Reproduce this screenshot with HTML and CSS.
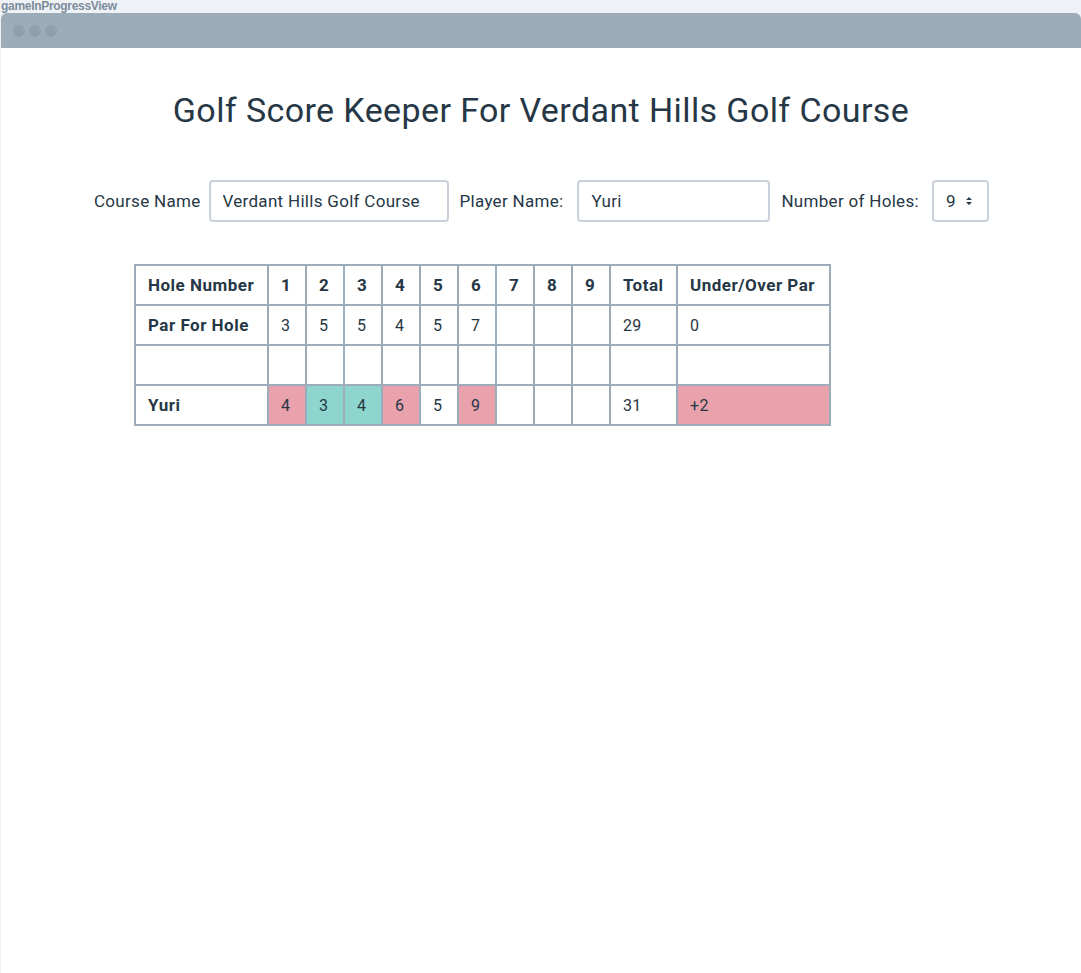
FILE: index.html
```html
<!DOCTYPE html>
<html>
<head>
<meta charset="utf-8">
<link rel="stylesheet" href="styles.css">
</head>
<body>
<div class="view-label">gameInProgressView</div>
<div class="window">
  <div class="titlebar">
    <span class="dot"></span><span class="dot"></span><span class="dot"></span>
  </div>
  <div class="content">
    <h1 class="title">Golf Score Keeper For Verdant Hills Golf Course</h1>
    <div class="form-row">
      <label class="lbl lbl-course">Course Name</label>
      <input class="field field-course" type="text" value="Verdant Hills Golf Course">
      <label class="lbl lbl-player">Player Name:</label>
      <input class="field field-player" type="text" value="Yuri">
      <label class="lbl lbl-holes">Number of Holes:</label>
      <div class="select"><span>9</span>
        <svg class="arrows" width="8" height="10" viewBox="0 0 8 10"><path d="M1 4 L4 1 L7 4 Z M1 6 L4 9 L7 6 Z" fill="#2a3a4a"/></svg>
      </div>
    </div>
    <table class="score">
      <colgroup>
        <col class="w-name">
        <col class="w-hole"><col class="w-hole"><col class="w-hole"><col class="w-hole"><col class="w-hole"><col class="w-hole"><col class="w-hole"><col class="w-hole"><col class="w-hole">
        <col class="w-total">
        <col class="w-par">
      </colgroup>
      <tr class="head">
        <th>Hole Number</th>
        <th>1</th><th>2</th><th>3</th><th>4</th><th>5</th><th>6</th><th>7</th><th>8</th><th>9</th>
        <th>Total</th>
        <th>Under/Over Par</th>
      </tr>
      <tr>
        <th>Par For Hole</th>
        <td>3</td><td>5</td><td>5</td><td>4</td><td>5</td><td>7</td><td></td><td></td><td></td>
        <td>29</td><td>0</td>
      </tr>
      <tr>
        <th></th>
        <td></td><td></td><td></td><td></td><td></td><td></td><td></td><td></td><td></td>
        <td></td><td></td>
      </tr>
      <tr>
        <th>Yuri</th>
        <td class="over">4</td><td class="under">3</td><td class="under">4</td><td class="over">6</td><td>5</td><td class="over">9</td><td></td><td></td><td></td>
        <td>31</td><td class="over">+2</td>
      </tr>
    </table>
  </div>
</div>
</body>
</html>
```

FILE: styles.css
```css
html, body {
  margin: 0;
  padding: 0;
  background: #eef2f6;
  height: 100%;
  overflow: hidden;
}
body {
  font-family: Roboto, "Noto Sans", sans-serif;
  color: #263746;
}
.view-label {
  height: 13px;
  font-size: 12px;
  line-height: 12px;
  font-weight: 600;
  color: #7d8c9b;
  padding-left: 1px;
  font-family: "Liberation Sans", Arial, sans-serif;
  letter-spacing: -0.3px;
}
.window {
  margin-left: 1px;
  background: #ffffff;
  border-radius: 6px 6px 0 0;
  height: 960px;
  overflow: hidden;
}
.titlebar {
  height: 35px;
  background: #9dacb9;
  display: flex;
  align-items: center;
  gap: 4px;
  padding-left: 12px;
}
.dot {
  width: 12px;
  height: 12px;
  border-radius: 50%;
  background: #8f9fad;
}
.content {
  padding-top: 40px;
}
.title {
  margin: 0;
  text-align: center;
  font-weight: 400;
  font-size: 34px;
  line-height: 44px;
  letter-spacing: 0.4px;
}
.form-row {
  display: flex;
  align-items: center;
  margin-top: 48px;
  padding-left: 93px;
  font-size: 17px;
  letter-spacing: 0.3px;
}
.lbl { margin-right: 11px; }
.lbl-course { margin-right: 8px; }
.lbl-player { margin-right: 14px; }
.lbl-holes { margin-right: 13px; }
.field {
  box-sizing: border-box;
  height: 42px;
  border: 2px solid #c9d2db;
  border-radius: 4px;
  padding: 0 12px;
  font: inherit;
  letter-spacing: 0.3px;
  color: #263746;
  margin-right: 11px;
  outline: none;
}
.field-course { width: 240px; }
.field-player { width: 193px; }
.select {
  box-sizing: border-box;
  height: 42px;
  width: 57px;
  border: 2px solid #c9d2db;
  border-radius: 4px;
  display: flex;
  align-items: center;
  padding-left: 12px;
  gap: 9px;
}
.score {
  border-collapse: collapse;
  table-layout: fixed;
  width: 695px;
  margin-top: 42px;
  margin-left: 133px;
  font-size: 16px;
}
.w-name { width: 133px; }
.w-hole { width: 38px; }
.w-total { width: 67px; }
.w-par { width: 153px; }
.score th, .score td {
  border: 2px solid #9dacba;
  height: 38px;
  padding: 0 0 0 12px;
  text-align: left;
  white-space: nowrap;
  overflow: hidden;
}
.score th {
  font-weight: 700;
  font-size: 17px;
  letter-spacing: 0.5px;
}
.score td { font-weight: 400; letter-spacing: 0.3px; }
.over { background: #e9a1ab; }
.under { background: #8dd5cd; }
```
